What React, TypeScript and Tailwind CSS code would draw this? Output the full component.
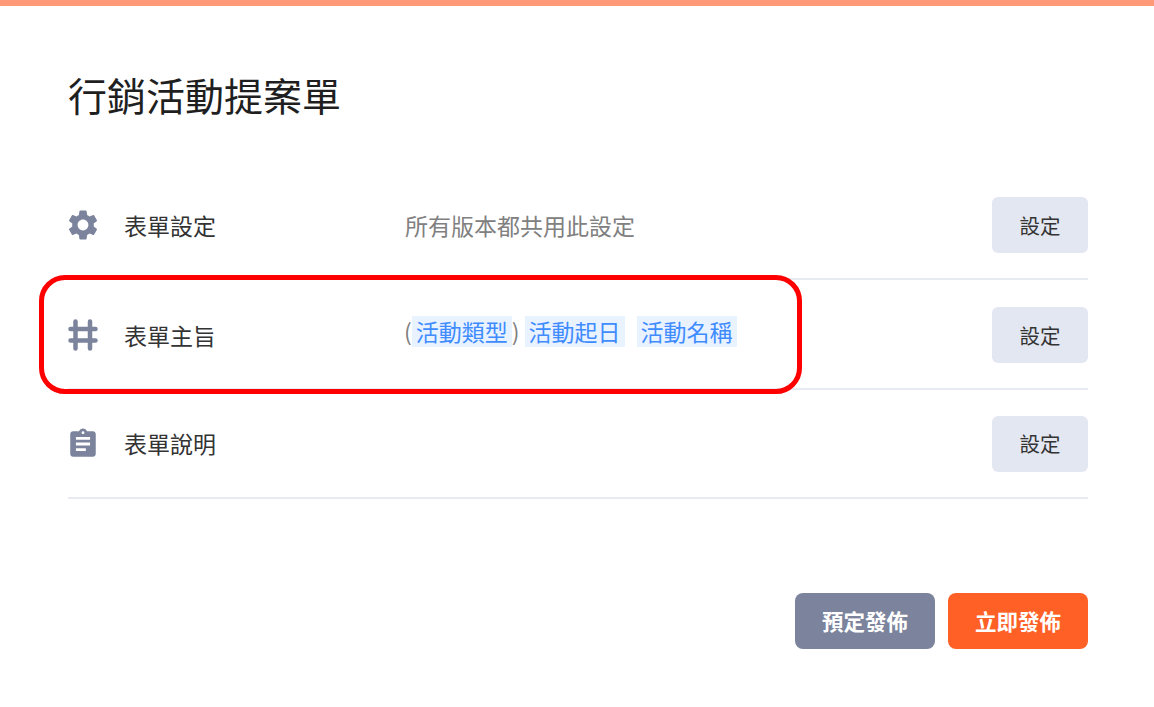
import { ReactNode } from 'react';

const font = { fontFamily: '"Noto Sans CJK TC", "Noto Sans", sans-serif' };

function GearIcon() {
    return (
        <svg width="36" height="36" viewBox="0 0 24 24" fill="#7b849c" className="-ml-[3px]">
            <path d="M19.14 12.94c.04-.3.06-.61.06-.94 0-.32-.02-.64-.07-.94l2.03-1.58a.49.49 0 0 0 .12-.61l-1.92-3.32a.488.488 0 0 0-.59-.22l-2.39.96c-.5-.38-1.03-.7-1.62-.94l-.36-2.54a.484.484 0 0 0-.48-.41h-3.84c-.24 0-.43.17-.47.41l-.36 2.54c-.59.24-1.13.57-1.62.94l-2.39-.96c-.22-.08-.47 0-.59.22L2.74 8.87c-.12.21-.08.47.12.61l2.03 1.58c-.05.3-.09.63-.09.94s.02.64.07.94l-2.03 1.58a.49.49 0 0 0-.12.61l1.92 3.32c.12.22.37.29.59.22l2.39-.96c.5.38 1.03.7 1.62.94l.36 2.54c.05.24.24.41.48.41h3.84c.24 0 .44-.17.47-.41l.36-2.54c.59-.24 1.13-.56 1.62-.94l2.39.96c.22.08.47 0 .59-.22l1.92-3.32c.12-.22.07-.47-.12-.61l-2.01-1.58zM12 15.6c-1.98 0-3.6-1.62-3.6-3.6s1.62-3.6 3.6-3.6 3.6 1.62 3.6 3.6-1.62 3.6-3.6 3.6z" />
        </svg>
    );
}

function HashIcon() {
    return (
        <svg width="30" height="32" viewBox="0 0 30 32" fill="none" stroke="#7b849c" strokeWidth="4.5" strokeLinecap="round">
            <path d="M7.500 2.500v27M22 2.500v27M2.500 10h25M2.500 21.500h25" />
        </svg>
    );
}

function ClipboardIcon() {
    return (
        <svg width="34" height="34" viewBox="0 0 24 24" fill="#7b849c" className="-ml-[2px]">
            <path d="M19 3h-4.180C14.400 1.840 13.300 1 12 1s-2.400.840-2.820 2H5c-1.100 0-2 .900-2 2v14c0 1.100.900 2 2 2h14c1.100 0 2-.900 2-2V5c0-1.100-.900-2-2-2zm-7 0c.550 0 1 .450 1 1s-.450 1-1 1-1-.450-1-1 .450-1 1-1zm2 14H7v-2h7v2zm3-4H7v-2h10v2zm0-4H7V7h10v2z" />
        </svg>
    );
}

function Tag({ children }: { children: ReactNode }) {
    return <span className="flex h-[31px] w-[100px] items-center justify-center bg-[#e9f2ff] text-[#3f8cff]">{children}</span>;
}

function Row({ icon, label, className, children }: { icon: ReactNode; label: string; className: string; children?: ReactNode }) {
    return (
        <div className={`flex items-center border-b-2 border-[#e8eaf2] ${className}`}>
            <div className="flex w-[56px] items-center">{icon}</div>
            <div className="w-[281px] text-[23px] text-[#333]">{label}</div>
            <div className="flex-1 text-[23px] text-[#808080]">{children}</div>
            <button className="h-[56px] w-[96px] rounded-md bg-[#e3e7f1] text-[20.5px] text-[#333]">設定</button>
        </div>
    );
}

export default function App() {
    return (
        <div className="relative h-[707px] w-[1154px] overflow-hidden bg-white" style={font}>
            <div className="h-[6px] bg-[#ff9a78]" />
            <div className="pl-[68px] pr-[66px]">
                <h1 className="mt-[61px] h-[55px] text-[39px] leading-[55px] text-[#1f1f1f]">行銷活動提案單</h1>
                <div className="mt-[48px]">
                    <Row icon={<GearIcon />} label="表單設定" className="h-[110px] pt-[2px]">所有版本都共用此設定</Row>
                    <Row icon={<HashIcon />} label="表單主旨" className="h-[110px] pt-[2px]">
                        <span className="mb-[7px] -ml-px flex items-center">
                            (<Tag>活動類型</Tag>)<span className="ml-[5px]"><Tag>活動起日</Tag></span>
                            <span className="ml-[12px]"><Tag>活動名稱</Tag></span>
                        </span>
                    </Row>
                    <Row icon={<ClipboardIcon />} label="表單說明" className="h-[109px]" />
                </div>
                <div className="mt-[94px] flex justify-end gap-[13px]">
                    <button className="h-[56px] w-[140px] rounded-lg bg-[#7b849c] text-[21.5px] font-bold text-white">預定發佈</button>
                    <button className="h-[56px] w-[140px] rounded-lg bg-[#ff6026] text-[21.5px] font-bold text-white">立即發佈</button>
                </div>
            </div>
            <div className="absolute left-[39px] top-[275px] h-[119px] w-[763px] rounded-[26px] border-[5px] border-[#ff0000]" />
        </div>
    );
}
